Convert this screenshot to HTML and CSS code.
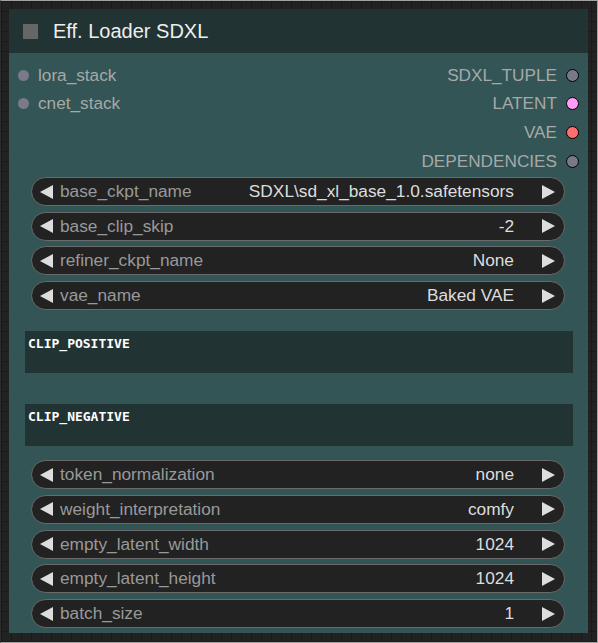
FILE: index.html
```html
<!DOCTYPE html>
<html>
<head>
<meta charset="utf-8">
<link rel="stylesheet" href="styles.css">
</head>
<body>
<div class="canvas">
  <div class="node">
    <div class="title">
      <span class="box"></span>
      <span class="title-text">Eff. Loader SDXL</span>
    </div>
    <div class="slots">
      <div class="inputs">
        <div class="slot in"><span class="dot"></span><span>lora_stack</span></div>
        <div class="slot in"><span class="dot"></span><span>cnet_stack</span></div>
      </div>
      <div class="outputs">
        <div class="slot out"><span>SDXL_TUPLE</span><span class="dot odot gray"></span></div>
        <div class="slot out"><span>LATENT</span><span class="dot odot pink"></span></div>
        <div class="slot out"><span>VAE</span><span class="dot odot red"></span></div>
        <div class="slot out"><span>DEPENDENCIES</span><span class="dot odot gray"></span></div>
      </div>
    </div>
    <div class="widgets">
      <div class="widget"><span class="al"></span><span class="label">base_ckpt_name</span><span class="value">SDXL\sd_xl_base_1.0.safetensors</span><span class="ar"></span></div>
      <div class="widget"><span class="al"></span><span class="label">base_clip_skip</span><span class="value">-2</span><span class="ar"></span></div>
      <div class="widget"><span class="al"></span><span class="label">refiner_ckpt_name</span><span class="value">None</span><span class="ar"></span></div>
      <div class="widget"><span class="al"></span><span class="label">vae_name</span><span class="value">Baked VAE</span><span class="ar"></span></div>
    </div>
    <div class="textbox first">CLIP_POSITIVE</div>
    <div class="textbox second">CLIP_NEGATIVE</div>
    <div class="widgets lower">
      <div class="widget"><span class="al"></span><span class="label">token_normalization</span><span class="value">none</span><span class="ar"></span></div>
      <div class="widget"><span class="al"></span><span class="label">weight_interpretation</span><span class="value">comfy</span><span class="ar"></span></div>
      <div class="widget"><span class="al"></span><span class="label">empty_latent_width</span><span class="value">1024</span><span class="ar"></span></div>
      <div class="widget"><span class="al"></span><span class="label">empty_latent_height</span><span class="value">1024</span><span class="ar"></span></div>
      <div class="widget"><span class="al"></span><span class="label">batch_size</span><span class="value">1</span><span class="ar"></span></div>
    </div>
  </div>
</div>
</body>
</html>
```

FILE: styles.css
```css
* { box-sizing: border-box; }
html, body { margin: 0; padding: 0; }
body {
  width: 598px;
  height: 643px;
  overflow: hidden;
  font-family: "Liberation Sans", Arial, sans-serif;
}
.canvas {
  width: 598px;
  height: 643px;
  border-top: 1px solid #a3a3a3;
  border-right: 1px solid #a3a3a3;
  border-bottom: 1px solid #a3a3a3;
  border-left: 1px solid #2c2c2c;
  padding: 8px 0 0 8px;
  background-color: #222222;
  background-image:
    linear-gradient(to right, #1a1a1a 1px, transparent 1px),
    linear-gradient(to bottom, #1a1a1a 1px, transparent 1px);
  background-size: 10px 10px;
}
.node {
  width: 579px;
  height: 624px;
  background: #335555;
  display: flex;
  flex-direction: column;
}
.title {
  height: 44px;
  background: #223333;
  display: flex;
  align-items: center;
  padding-left: 14px;
  flex-shrink: 0;
}
.box {
  width: 15px;
  height: 15px;
  background: #666666;
}
.title-text {
  margin-left: 15px;
  font-size: 20px;
  color: #eeeeee;
}
.slots {
  display: flex;
  justify-content: space-between;
  padding-top: 8px;
  font-size: 17.2px;
  color: #a8a8a8;
}
.slot {
  height: 28.67px;
  display: flex;
  align-items: center;
}
.in { padding-left: 9px; }
.in .dot {
  width: 11px;
  height: 11px;
  border-radius: 50%;
  background: #7a7a8a;
  margin-right: 9px;
}
.out { justify-content: flex-end; padding-right: 9px; }
.odot {
  width: 13px;
  height: 13px;
  border-radius: 50%;
  border: 1.5px solid #000;
  margin-left: 9px;
}
.gray { background: #787888; }
.pink { background: #ff9cf9; }
.red { background: #ff6e6e; }
.widgets {
  display: flex;
  flex-direction: column;
  gap: 5.67px;
  margin: 1.5px 23px 0 22px;
}
.widgets.lower { margin-top: 14px; gap: 5.75px; }
.widget {
  height: 29px;
  border: 1px solid #6a6a6a;
  border-radius: 15px;
  background: #222222;
  display: flex;
  align-items: center;
  padding: 0 9px 0 8px;
  font-size: 17.3px;
}
.al {
  width: 0; height: 0;
  border-top: 7px solid transparent;
  border-bottom: 7px solid transparent;
  border-right: 13px solid #dddddd;
}
.ar {
  width: 0; height: 0;
  border-top: 7px solid transparent;
  border-bottom: 7px solid transparent;
  border-left: 13px solid #dddddd;
  margin-left: 28px;
}
.label {
  margin-left: 7px;
  color: #999999;
  flex: 1;
}
.value { color: #dddddd; }
.textbox {
  height: 42px;
  margin: 0 15px 0 16px;
  background: #223333;
  color: #ffffff;
  font-family: "DejaVu Sans Mono", monospace;
  font-size: 13px;
  font-weight: bold;
  padding: 5px 3px;
}
.textbox.first { margin-top: 21px; }
.textbox.second { margin-top: 31px; }
```
